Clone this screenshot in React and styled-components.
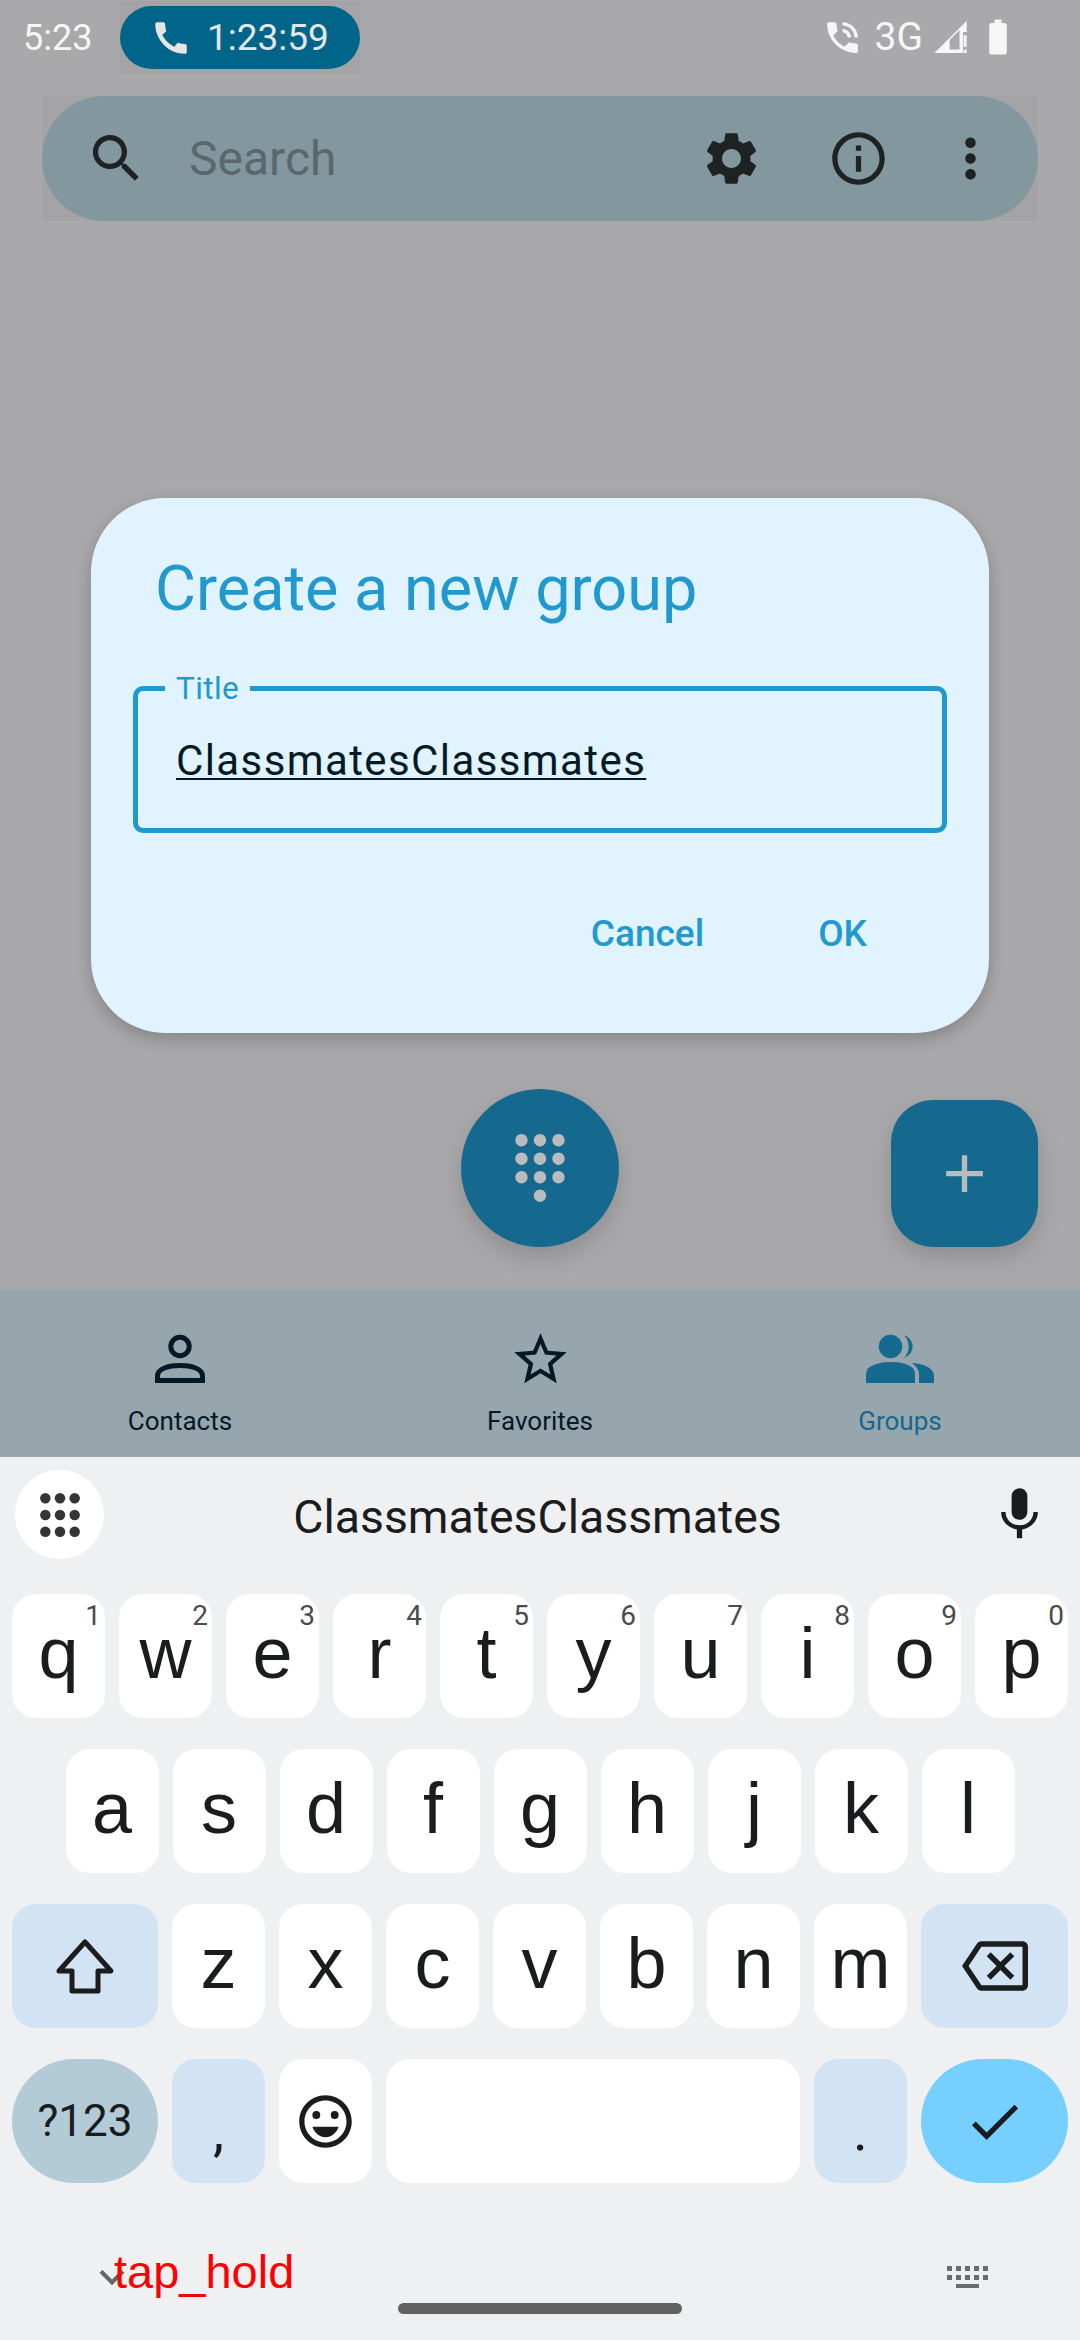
import React from "react";
import styled, {createGlobalStyle} from "styled-components";
import {
    MdCall,
    MdPhoneInTalk,
    MdSearch,
    MdSettings,
    MdInfoOutline,
    MdMoreVert,
    MdDialpad,
    MdAdd,
    MdStarBorder,
    MdMic,
    MdCheck,
    MdOutlineBackspace,
    MdOutlineEmojiEmotions,
    MdKeyboardArrowDown,
    MdBatteryFull,
} from "react-icons/md";

const GlobalStyle = createGlobalStyle`
    html, body {
        margin: 0;
        padding: 0;
        background: #a9a9ab;
    }
    * {
        box-sizing: border-box;
    }
`;

const Screen = styled.div`
    position: relative;
    width: 1080px;
    height: 2340px;
    overflow: hidden;
    display: flex;
    flex-direction: column;
    font-family: Roboto, sans-serif;
`;

const Main = styled.div`
    height: 1457px;
    background: #a9a9ab;
    display: flex;
    flex-direction: column;
`;

const StatusBar = styled.div`
    height: 96px;
    display: flex;
    align-items: flex-start;
    color: #f6f6f6;
    font-size: 36px;
`;

const Clock = styled.div`
    width: 120px;
    padding: 17px 0 0 23px;
    line-height: 42px;
`;

const PillBox = styled.div`
    width: 240px;
    height: 73px;
    margin-top: 1px;
    padding-top: 5px;
    background: #a4a4a6;
`;

const CallPill = styled.div`
    height: 63px;
    border-radius: 32px;
    background: #016489;
    display: flex;
    align-items: center;
    padding-left: 30px;
    gap: 15px;
    color: #e6e6e6;
    font-size: 37px;
`;

const StatusIcons = styled.div`
    margin-left: auto;
    margin-right: 61px;
    height: 74px;
    display: flex;
    align-items: center;
    color: #f6f6f6;
`;

const NetworkLabel = styled.span`
    font-size: 39px;
    margin: 0 11px 0 12px;
`;

const BatteryIcon = styled(MdBatteryFull)`
    margin-left: 10px;
`;

const SearchWrap = styled.div`
    margin: 0 42px;
    height: 125px;
    background: #a4a4a6;
`;

const SearchBar = styled.div`
    height: 100%;
    border-radius: 62px;
    background: #83979f;
    display: flex;
    align-items: center;
    padding: 0 36px 0 43px;
    color: #1f2223;
`;

const SearchText = styled.div`
    margin-left: 41px;
    margin-right: auto;
    font-size: 48px;
    color: #5a686e;
`;

const ActionIcon = styled.div`
    width: 63px;
    height: 63px;
    margin-left: ${(p) => p.$gap || 0}px;
    display: flex;
    align-items: center;
    justify-content: center;
`;

const FabRow = styled.div`
    margin-top: auto;
    margin-bottom: 42px;
    padding-right: 42px;
    display: flex;
    align-items: flex-end;
`;

const DialFab = styled.div`
    width: 158px;
    height: 158px;
    margin-left: 461px;
    border-radius: 50%;
    background: #15698e;
    color: #b9bbbd;
    display: flex;
    align-items: center;
    justify-content: center;
    box-shadow: 0 10px 24px rgba(0, 0, 0, 0.16);
`;

const AddFab = styled.div`
    width: 147px;
    height: 147px;
    margin-left: auto;
    border-radius: 42px;
    background: #15698e;
    color: #b9bbbd;
    display: flex;
    align-items: center;
    justify-content: center;
    box-shadow: 0 10px 24px rgba(0, 0, 0, 0.16);
`;

const NavBar = styled.div`
    height: 168px;
    background: #97a5ad;
    display: grid;
    grid-template-columns: 1fr 1fr 1fr;
`;

const NavItem = styled.div`
    display: flex;
    flex-direction: column;
    align-items: center;
    padding-top: 43px;
    color: ${(p) => (p.$active ? "#15698e" : "#021a26")};
`;

const NavIcon = styled.div`
    height: 54px;
    display: flex;
    align-items: center;
    justify-content: center;
`;

const NavLabel = styled.div`
    margin-top: 18px;
    font-size: 26px;
    line-height: 34px;
`;

const Dialog = styled.div`
    position: absolute;
    left: 91px;
    top: 498px;
    width: 898px;
    height: 535px;
    border-radius: 74px;
    background: #e0f3ff;
    box-shadow: 0 6px 18px rgba(0, 0, 0, 0.22);
    padding: 55px 42px 0;
`;

const DialogTitle = styled.div`
    margin-left: 22px;
    font-size: 63px;
    line-height: 72px;
    color: #2199cf;
`;

const Field = styled.div`
    position: relative;
    margin-top: 61px;
    height: 147px;
    border: 5px solid #2199cf;
    border-radius: 10px;
    padding: 45px 0 0 38px;
    font-size: 42px;
    line-height: 50px;
    letter-spacing: 1.4px;
    color: #021a26;
`;

const FieldLabel = styled.span`
    position: absolute;
    left: 27px;
    top: -19px;
    padding: 0 11px;
    background: #e0f3ff;
    font-size: 31.5px;
    line-height: 34px;
    letter-spacing: 0.4px;
    color: #2199cf;
`;

const Composing = styled.span`
    text-decoration: underline;
    text-underline-offset: 3px;
    text-decoration-thickness: 2px;
`;

const DialogActions = styled.div`
    margin-top: 79px;
    display: flex;
    justify-content: flex-end;
    gap: 114px;
    padding-right: 80px;
`;

const DialogButton = styled.div`
    font-size: 37px;
    font-weight: 500;
    line-height: 44px;
    color: #2199cf;
`;

const Keyboard = styled.div`
    flex: 1;
    background: #eff0f2;
    display: flex;
    flex-direction: column;
    padding-top: 13px;
    font-family: "Liberation Sans", Arial, sans-serif;
    color: #1a1c1e;
`;

const SuggestionRow = styled.div`
    height: 89px;
    margin-bottom: 35px;
    padding: 0 29px 0 15px;
    display: flex;
    align-items: center;
`;

const WidgetButton = styled.div`
    width: 89px;
    height: 89px;
    border-radius: 50%;
    background: #fff;
    display: flex;
    align-items: center;
    justify-content: center;
`;

const Suggestion = styled.div`
    flex: 1;
    text-align: center;
    font-family: Roboto, sans-serif;
    font-size: 46.4px;
    padding: 5px 17px 0 0;
`;

const KeyRow = styled.div`
    height: 124px;
    margin-bottom: 31px;
    display: flex;
    justify-content: center;
    gap: 14px;
`;

const Key = styled.div`
    position: relative;
    width: ${(p) => p.$width || 93}px;
    border-radius: ${(p) => (p.$round ? 62 : 24)}px;
    background: ${(p) => p.$bg || "#fff"};
    display: flex;
    align-items: center;
    justify-content: center;
`;

const LetterKey = styled(Key)`
    padding-bottom: 6px;
    font-size: 72px;
`;

const Hint = styled.span`
    position: absolute;
    top: 6px;
    right: 4px;
    font-family: Roboto, sans-serif;
    font-size: 28px;
    line-height: 32px;
    color: #4b4b4b;
`;

const SymbolLabel = styled.span`
    font-family: Roboto, sans-serif;
    font-size: 44px;
`;

const PunctKey = styled(Key)`
    align-items: flex-end;
    padding-bottom: 24px;
    font-family: Roboto, sans-serif;
    font-size: 56px;
    line-height: 56px;
`;

const BottomBar = styled.div`
    flex: 1;
    position: relative;
    margin-top: -31px;
`;

const HideChevron = styled.div`
    position: absolute;
    left: 87px;
    top: 69px;
    color: #666;
    line-height: 0;
`;

const KeyboardSwitch = styled.svg`
    position: absolute;
    left: 947px;
    top: 83px;
`;

const DebugLabel = styled.div`
    position: absolute;
    left: 114px;
    top: 62px;
    font-family: "Liberation Sans", Arial, sans-serif;
    font-size: 47px;
    line-height: 54px;
    color: #ff0000;
`;

const HomePill = styled.div`
    position: absolute;
    left: 398px;
    top: 120px;
    width: 284px;
    height: 11px;
    border-radius: 6px;
    background: #626262;
`;

function DotGrid() {
    const dots = [];
    for (let r = 0; r < 3; r++) {
        for (let c = 0; c < 3; c++) {
            dots.push(<circle key={`${r}${c}`} cx={5 + c * 14} cy={5 + r * 16} r="5" fill="#333436" />);
        }
    }
    return (
        <svg width="44" height="44" viewBox="0 0 38 42">
            {dots}
        </svg>
    );
}

function ShiftIcon() {
    return (
        <svg width="60" height="56" viewBox="0 0 60 56" fill="none" stroke="#1a1c1e" strokeWidth="5" strokeLinejoin="round">
            <path d="M30 4 L56 33 H43 V53 H17 V33 H4 Z" />
        </svg>
    );
}

function SignalIcon() {
    return (
        <svg width="33" height="32" viewBox="0 0 95 94" fill="#f6f6f6">
            <path fillRule="evenodd" d="M0 94 L95 0 V32 H84 V94 Z M45 84 V56 L74 27 V84 Z" />
            <rect x="86" y="42" width="9" height="34" />
            <rect x="86" y="84" width="9" height="10" />
        </svg>
    );
}

function PersonIcon() {
    return (
        <svg width="56" height="54" viewBox="0 0 56 54" fill="none" stroke="currentColor" strokeWidth="5">
            <circle cx="28" cy="14.5" r="9.2" />
            <path d="M5.5 48.5 V44 C5.5 36 18 33.5 28 33.5 C38 33.5 50.5 36 50.5 44 V48.5 Z" />
        </svg>
    );
}

function GroupIcon() {
    return (
        <svg width="76" height="54" viewBox="0 0 76 54" fill="currentColor">
            <circle cx="28.5" cy="14.5" r="11.7" />
            <path d="M42 3.2 A11.7 11.7 0 0 1 42 25.8 A16 16 0 0 0 42 3.2 Z" />
            <path d="M4 51 V42 C4 33 18 30 29 30 C40 30 53 33 53 42 V51 Z" />
            <path d="M50 31 C63 32 72 36 72 44 V51 H57 V42 C57 38 54 34 50 31 Z" />
        </svg>
    );
}

const topRow = ["q", "w", "e", "r", "t", "y", "u", "i", "o", "p"];
const midRow = ["a", "s", "d", "f", "g", "h", "j", "k", "l"];
const lowRow = ["z", "x", "c", "v", "b", "n", "m"];

export default function App() {
    return (
        <Screen>
            <GlobalStyle />
            <Main>
                <StatusBar>
                    <Clock>5:23</Clock>
                    <PillBox>
                        <CallPill>
                            <MdCall size={42} />
                            1:23:59
                        </CallPill>
                    </PillBox>
                    <StatusIcons>
                        <MdPhoneInTalk size={41} />
                        <NetworkLabel>3G</NetworkLabel>
                        <SignalIcon />
                        <BatteryIcon size={42} />
                    </StatusIcons>
                </StatusBar>
                <SearchWrap>
                    <SearchBar>
                        <ActionIcon>
                            <MdSearch size={63} />
                        </ActionIcon>
                        <SearchText>Search</SearchText>
                        <ActionIcon>
                            <MdSettings size={63} />
                        </ActionIcon>
                        <ActionIcon $gap={64}>
                            <MdInfoOutline size={63} />
                        </ActionIcon>
                        <ActionIcon $gap={49}>
                            <MdMoreVert size={63} />
                        </ActionIcon>
                    </SearchBar>
                </SearchWrap>
                <FabRow>
                    <DialFab>
                        <MdDialpad size={74} />
                    </DialFab>
                    <AddFab>
                        <MdAdd size={63} />
                    </AddFab>
                </FabRow>
                <NavBar>
                    <NavItem>
                        <NavIcon>
                            <PersonIcon />
                        </NavIcon>
                        <NavLabel>Contacts</NavLabel>
                    </NavItem>
                    <NavItem>
                        <NavIcon>
                            <MdStarBorder size={63} />
                        </NavIcon>
                        <NavLabel>Favorites</NavLabel>
                    </NavItem>
                    <NavItem $active>
                        <NavIcon>
                            <GroupIcon />
                        </NavIcon>
                        <NavLabel>Groups</NavLabel>
                    </NavItem>
                </NavBar>
            </Main>
            <Dialog>
                <DialogTitle>Create a new group</DialogTitle>
                <Field>
                    <FieldLabel>Title</FieldLabel>
                    <Composing>ClassmatesClassmates</Composing>
                </Field>
                <DialogActions>
                    <DialogButton>Cancel</DialogButton>
                    <DialogButton>OK</DialogButton>
                </DialogActions>
            </Dialog>
            <Keyboard>
                <SuggestionRow>
                    <WidgetButton>
                        <DotGrid />
                    </WidgetButton>
                    <Suggestion>ClassmatesClassmates</Suggestion>
                    <MdMic size={63} />
                </SuggestionRow>
                <KeyRow>
                    {topRow.map((letter, index) => (
                        <LetterKey key={letter}>
                            {letter}
                            <Hint>{(index + 1) % 10}</Hint>
                        </LetterKey>
                    ))}
                </KeyRow>
                <KeyRow>
                    {midRow.map((letter) => (
                        <LetterKey key={letter}>{letter}</LetterKey>
                    ))}
                </KeyRow>
                <KeyRow>
                    <Key $width={146} $bg="#d2e4f3">
                        <ShiftIcon />
                    </Key>
                    {lowRow.map((letter) => (
                        <LetterKey key={letter}>{letter}</LetterKey>
                    ))}
                    <Key $width={147} $bg="#d2e4f3">
                        <MdOutlineBackspace size={66} />
                    </Key>
                </KeyRow>
                <KeyRow>
                    <Key $width={146} $round $bg="#b3cad7">
                        <SymbolLabel>?123</SymbolLabel>
                    </Key>
                    <PunctKey $bg="#d2e4f3">,</PunctKey>
                    <Key>
                        <MdOutlineEmojiEmotions size={63} />
                    </Key>
                    <Key $width={414} />
                    <PunctKey $bg="#d2e4f3">.</PunctKey>
                    <Key $width={147} $round $bg="#77cfff">
                        <MdCheck size={63} />
                    </Key>
                </KeyRow>
                <BottomBar>
                    <HideChevron>
                        <MdKeyboardArrowDown size={50} />
                    </HideChevron>
                    <DebugLabel>tap_hold</DebugLabel>
                    <KeyboardSwitch width="41" height="22" viewBox="0 0 41 22" fill="#6b6b6b">
                        {[0, 1, 2, 3, 4].map((i) => (
                            <g key={i}>
                                <rect x={i * 9} y="0" width="5" height="5" />
                                <rect x={i * 9} y="9" width="5" height="5" />
                            </g>
                        ))}
                        <rect x="9" y="18" width="23" height="4" />
                    </KeyboardSwitch>
                    <HomePill />
                </BottomBar>
            </Keyboard>
        </Screen>
    );
}
